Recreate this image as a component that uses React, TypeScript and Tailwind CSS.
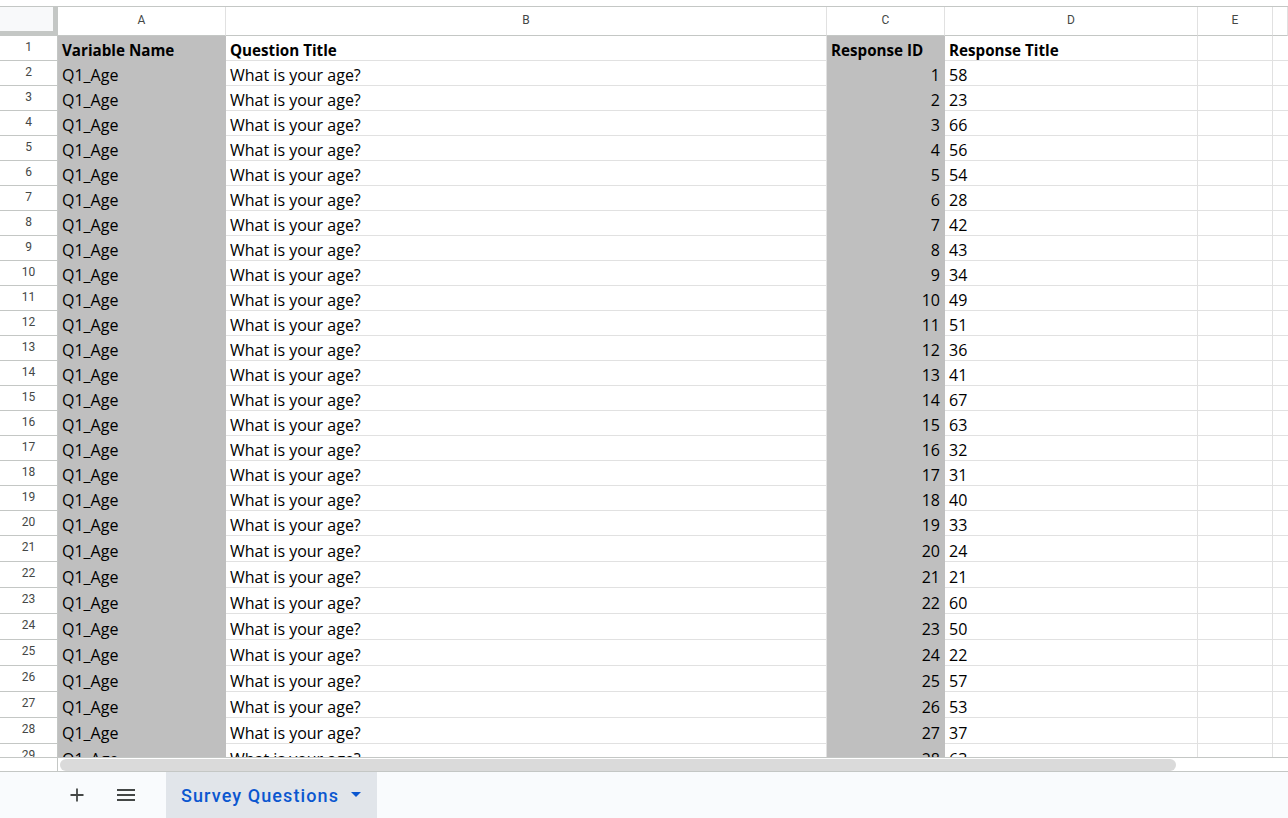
import React from 'react';

const responses = [58, 23, 66, 56, 54, 28, 42, 43, 34, 49, 51, 36, 41, 67, 63, 32, 31, 40, 33, 24, 21, 60, 50, 22, 57, 53, 37, 63];

const cols = 'grid grid-cols-[58px_168px_601px_118px_253px_75px_1fr]';
const cellFont = { fontFamily: '"Open Sans", "Liberation Sans", sans-serif' };

function HeaderRow() {
  return (
    <div className={`${cols} h-[30px] border-t border-[#c4c7c5] text-[12px] text-[#444746]`} style={{ fontFamily: 'Roboto, Arial, sans-serif' }}>
      <div className="border-r-[5px] border-b-[5px] border-[#c4c7c5] bg-[#f8f9fa]" />
      {['A', 'B', 'C', 'D', 'E', ''].map((l, i) => (
        <div key={i} className="flex items-center justify-center border-r border-b border-[#e1e1e1] border-b-[#c4c7c5] pb-[2px]">
          {l}
        </div>
      ))}
    </div>
  );
}

function Row({ n, h, cells, bold }: { n: number; h: string; cells: [string, string, string, string]; bold?: boolean }) {
  const weight = bold ? 'font-bold text-[15.2px]' : 'text-[16px]';
  return (
    <div className={`${cols} ${h} leading-[20px] text-black`}>
      <div className="flex justify-center pt-[3px] border-r border-b border-[#c4c7c5] text-[12px] leading-[16px] text-[#444746]" style={{ fontFamily: 'Roboto, Arial, sans-serif' }}>
        {n}
      </div>
      <div className={`flex items-end pl-[4px] bg-[#bfbfbf] border-r border-b border-[#bfbfbf] ${weight}`} style={cellFont}>{cells[0]}</div>
      <div className={`flex items-end pl-[4px] border-r border-b border-[#e1e1e1] ${weight}`} style={cellFont}>{cells[1]}</div>
      <div className={`flex items-end px-[4px] bg-[#bfbfbf] border-r border-b border-[#bfbfbf] ${weight} ${bold ? 'justify-start' : 'justify-end'}`} style={cellFont}>{cells[2]}</div>
      <div className={`flex items-end pl-[4px] border-r border-b border-[#e1e1e1] ${weight}`} style={cellFont}>{cells[3]}</div>
      <div className="border-r border-b border-[#e1e1e1]" />
      <div className="border-b border-[#e1e1e1]" />
    </div>
  );
}

export default function App() {
  return (
    <div className="w-[1288px] h-[818px] bg-white flex flex-col overflow-hidden">
      <div className="h-[6px] shrink-0" />
      <HeaderRow />
      <div className="h-[721px] overflow-hidden shrink-0">
        <Row n={1} h="h-[25px]" bold cells={['Variable Name', 'Question Title', 'Response ID', 'Response Title']} />
        {responses.map((r, i) => (
          <Row
            key={i}
            n={i + 2}
            h={i + 2 <= 20 ? 'h-[25px]' : 'h-[26px]'}
            cells={['Q1_Age', 'What is your age?', String(i + 1), String(r)]}
          />
        ))}
      </div>

      {/* Horizontal scrollbar */}
      <div className="h-[15px] shrink-0 flex border-t border-b border-[#c4c7c5] bg-white">
        <div className="w-[58px] border-r border-[#c4c7c5]" />
        <div className="flex-1 flex items-center pl-[2px]">
          <div className="w-[1116px] h-[12px] rounded-full bg-[#dadada]" />
        </div>
      </div>

      {/* Sheet tabs */}
      <div className="flex-1 flex items-stretch bg-[#f9fbfd]" style={{ fontFamily: 'Roboto, Arial, sans-serif' }}>
        <div className="w-[63px]" />
        <div className="w-[28px] flex items-center justify-center">
          <svg width="16" height="16" viewBox="0 0 16 16"><path d="M8 1.5v13M1.5 8h13" stroke="#444746" strokeWidth="1.8" /></svg>
        </div>
        <div className="w-[21px]" />
        <div className="w-[28px] flex items-center justify-center">
          <svg width="18" height="14" viewBox="0 0 18 14"><path d="M0 2h18M0 7h18M0 12h18" stroke="#444746" strokeWidth="1.8" /></svg>
        </div>
        <div className="w-[26px]" />
        <div className="w-[211px] bg-[#e1e5ea] flex items-center pl-[15px] text-[#0b57d0] text-[18px] font-medium tracking-[1.1px]">
          <span>Survey Questions</span>
          <svg className="ml-[12px]" width="10" height="6" viewBox="0 0 10 6"><path d="M0 0h10L5 5z" fill="#0b57d0" /></svg>
        </div>
      </div>
    </div>
  );
}
